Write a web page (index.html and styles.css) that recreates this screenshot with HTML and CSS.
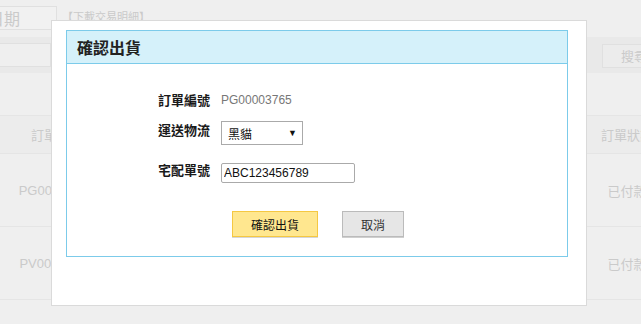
FILE: index.html
```html
<!DOCTYPE html>
<html lang="zh-Hant">
<head>
  <meta charset="UTF-8">
  <meta name="viewport" content="width=device-width, initial-scale=1.0">
  <title>確認出貨</title>
  <link rel="stylesheet" href="styles.css">
</head>
<body>
  <div class="page">
    <div class="topbar">
      <div class="date-box">日期</div>
      <span class="download">【下載交易明細】</span>
    </div>
    <div class="search-band">
      <div class="search-input"></div>
      <div class="search-btn">搜尋</div>
    </div>
    <div class="orders">
      <div class="orders-row orders-head">
        <div class="cell first">訂單編號</div>
        <div class="cell fill"></div>
        <div class="cell last">訂單狀態</div>
      </div>
      <div class="orders-row">
        <div class="cell first">PG00003765</div>
        <div class="cell fill"></div>
        <div class="cell last">已付款</div>
      </div>
      <div class="orders-row">
        <div class="cell first">PV00003766</div>
        <div class="cell fill"></div>
        <div class="cell last">已付款</div>
      </div>
    </div>
  </div>

  <div class="modal">
    <div class="panel">
      <div class="panel-head">確認出貨</div>
      <div class="panel-body">
        <div class="form-row row-order">
          <label class="form-label">訂單編號</label>
          <span class="order-no">PG00003765</span>
        </div>
        <div class="form-row row-ship">
          <label class="form-label" for="carrier">運送物流</label>
          <div class="select-wrap">
            <select id="carrier" class="select">
              <option>黑貓</option>
              <option>郵局</option>
              <option>新竹物流</option>
            </select>
          </div>
        </div>
        <div class="form-row row-track">
          <label class="form-label" for="tracking">宅配單號</label>
          <input type="text" id="tracking" class="text-input" value="ABC123456789">
        </div>
        <div class="actions">
          <button type="button" class="btn btn-confirm">確認出貨</button>
          <button type="button" class="btn btn-cancel">取消</button>
        </div>
      </div>
    </div>
  </div>
</body>
</html>
```

FILE: styles.css
```css
html, body {
  margin: 0;
  height: 100%;
  overflow: hidden;
}
body {
  background: #efefef;
  font-family: "Liberation Sans", "Noto Sans CJK TC", sans-serif;
  color: #222;
  position: relative;
}

/* dimmed page behind the dialog */
.page {
  color: #cacaca;
}
.topbar {
  display: flex;
  align-items: flex-start;
  padding-top: 6px;
}
.date-box {
  width: 80px;
  height: 22px;
  margin-left: -25px;
  border: 1px solid #e0e0e0;
  background: #f1f1f1;
  font-family: "Noto Sans CJK TC", sans-serif;
  font-size: 16px;
  line-height: 22px;
  text-indent: 12px;
}
.download {
  margin-left: 5px;
  margin-top: 3px;
  font-family: "Noto Sans CJK TC", sans-serif;
  font-size: 11px;
  line-height: 14px;
}
.search-band {
  display: flex;
  justify-content: space-between;
  align-items: flex-start;
  margin-top: 7px;
  height: 36px;
  background: #e9e9e9;
  box-sizing: border-box;
  padding-top: 6px;
}
.search-input {
  width: 60px;
  height: 22px;
  margin-left: -11px;
  border: 1px solid #e0e0e0;
  background: #efefef;
}
.search-btn {
  width: 50px;
  height: 22px;
  margin-top: 1px;
  margin-right: -31px;
  border: 1px solid #e0e0e0;
  background: #ececec;
  font-family: "Noto Sans CJK TC", sans-serif;
  font-size: 13px;
  line-height: 22px;
  padding-left: 18px;
}
.orders {
  margin-top: 42px;
  width: 677px;
  font-size: 13px;
}
.orders-row {
  display: flex;
  align-items: center;
  height: 72px;
  border-bottom: 1px solid #e5e5e5;
}
.orders-head {
  height: 37px;
  border-top: 1px solid #e5e5e5;
  background: #ececec;
}
.cell.first {
  width: 114px;
  text-align: center;
}
.cell.fill {
  flex: 1;
}
.cell.last {
  width: 100px;
  text-align: center;
}

/* dialog */
.modal {
  position: absolute;
  left: 51px;
  top: 20px;
  width: 502px;
  background: #fff;
  border: 1px solid #dadada;
  padding: 9px 18px 48px 14px;
}
.panel {
  border: 1px solid #7ccbea;
}
.panel-head {
  height: 32px;
  background: #d5f1fa;
  border-bottom: 1px solid #7ccbea;
  padding-left: 10px;
  font-family: "Noto Sans CJK TC", sans-serif;
  font-size: 16px;
  font-weight: bold;
  line-height: 33px;
  color: #222;
}
.panel-body {
  padding: 28px 0 19px;
}
.form-row {
  display: flex;
  align-items: flex-start;
  gap: 11px;
}
.form-label {
  width: 143px;
  text-align: right;
  font-family: "Noto Sans CJK TC", sans-serif;
  font-size: 13px;
  font-weight: bold;
  line-height: 16px;
  color: #1a1a1a;
}
.order-no {
  font-size: 12px;
  line-height: 16px;
  color: #777;
}
.row-ship {
  margin-top: 13px;
}
.row-ship .form-label {
  padding-top: 1px;
}
.row-track {
  margin-top: 17px;
}
.select-wrap {
  position: relative;
  width: 82px;
  height: 24px;
}
.select-wrap::after {
  content: "\25BC";
  position: absolute;
  right: 6px;
  top: 7px;
  font-size: 9px;
  line-height: 10px;
  color: #111;
  pointer-events: none;
}
.select {
  -webkit-appearance: none;
  appearance: none;
  width: 82px;
  height: 24px;
  margin: 0;
  border: 1px solid #aaa;
  border-radius: 0;
  background: #fff;
  padding: 0 0 0 6px;
  font-family: "Noto Sans CJK TC", sans-serif;
  font-size: 12px;
  color: #111;
}
.text-input {
  width: 134px;
  height: 20px;
  box-sizing: border-box;
  margin: 1px 0 0;
  border: 1px solid #aaa;
  border-radius: 2px;
  padding: 0 2px;
  font-family: "Liberation Sans", sans-serif;
  font-size: 12px;
  color: #111;
}
.actions {
  display: flex;
  justify-content: center;
  gap: 24px;
  margin-top: 28px;
  padding-left: 2px;
}
.btn {
  height: 26px;
  box-sizing: border-box;
  font-family: "Noto Sans CJK TC", sans-serif;
  font-size: 12px;
  cursor: pointer;
  padding: 0;
  border-radius: 0;
}
.btn-confirm {
  width: 86px;
  background: #ffe78f;
  border: 1px solid #f5c842;
  box-shadow: 0 1px 0 #d6d6d6;
  color: #111;
}
.btn-cancel {
  width: 62px;
  background: #e6e6e6;
  border: 1px solid #bbb;
  box-shadow: 0 1px 0 #cfcfcf;
  color: #333;
}
```
